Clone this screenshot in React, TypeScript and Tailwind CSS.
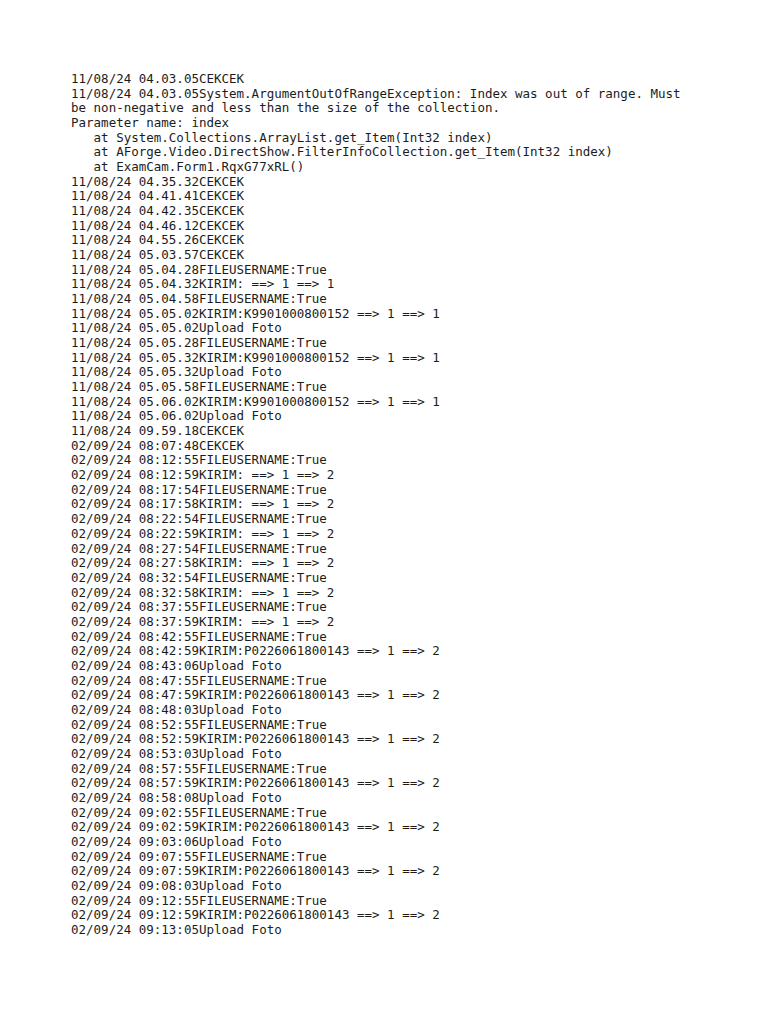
import React from "react";

const lines: string[] = [
  "11/08/24 04.03.05CEKCEK",
  "11/08/24 04.03.05System.ArgumentOutOfRangeException: Index was out of range. Must",
  "be non-negative and less than the size of the collection.",
  "Parameter name: index",
  "   at System.Collections.ArrayList.get_Item(Int32 index)",
  "   at AForge.Video.DirectShow.FilterInfoCollection.get_Item(Int32 index)",
  "   at ExamCam.Form1.RqxG77xRL()",
  "11/08/24 04.35.32CEKCEK",
  "11/08/24 04.41.41CEKCEK",
  "11/08/24 04.42.35CEKCEK",
  "11/08/24 04.46.12CEKCEK",
  "11/08/24 04.55.26CEKCEK",
  "11/08/24 05.03.57CEKCEK",
  "11/08/24 05.04.28FILEUSERNAME:True",
  "11/08/24 05.04.32KIRIM: ==> 1 ==> 1",
  "11/08/24 05.04.58FILEUSERNAME:True",
  "11/08/24 05.05.02KIRIM:K9901000800152 ==> 1 ==> 1",
  "11/08/24 05.05.02Upload Foto",
  "11/08/24 05.05.28FILEUSERNAME:True",
  "11/08/24 05.05.32KIRIM:K9901000800152 ==> 1 ==> 1",
  "11/08/24 05.05.32Upload Foto",
  "11/08/24 05.05.58FILEUSERNAME:True",
  "11/08/24 05.06.02KIRIM:K9901000800152 ==> 1 ==> 1",
  "11/08/24 05.06.02Upload Foto",
  "11/08/24 09.59.18CEKCEK",
  "02/09/24 08:07:48CEKCEK",
  "02/09/24 08:12:55FILEUSERNAME:True",
  "02/09/24 08:12:59KIRIM: ==> 1 ==> 2",
  "02/09/24 08:17:54FILEUSERNAME:True",
  "02/09/24 08:17:58KIRIM: ==> 1 ==> 2",
  "02/09/24 08:22:54FILEUSERNAME:True",
  "02/09/24 08:22:59KIRIM: ==> 1 ==> 2",
  "02/09/24 08:27:54FILEUSERNAME:True",
  "02/09/24 08:27:58KIRIM: ==> 1 ==> 2",
  "02/09/24 08:32:54FILEUSERNAME:True",
  "02/09/24 08:32:58KIRIM: ==> 1 ==> 2",
  "02/09/24 08:37:55FILEUSERNAME:True",
  "02/09/24 08:37:59KIRIM: ==> 1 ==> 2",
  "02/09/24 08:42:55FILEUSERNAME:True",
  "02/09/24 08:42:59KIRIM:P0226061800143 ==> 1 ==> 2",
  "02/09/24 08:43:06Upload Foto",
  "02/09/24 08:47:55FILEUSERNAME:True",
  "02/09/24 08:47:59KIRIM:P0226061800143 ==> 1 ==> 2",
  "02/09/24 08:48:03Upload Foto",
  "02/09/24 08:52:55FILEUSERNAME:True",
  "02/09/24 08:52:59KIRIM:P0226061800143 ==> 1 ==> 2",
  "02/09/24 08:53:03Upload Foto",
  "02/09/24 08:57:55FILEUSERNAME:True",
  "02/09/24 08:57:59KIRIM:P0226061800143 ==> 1 ==> 2",
  "02/09/24 08:58:08Upload Foto",
  "02/09/24 09:02:55FILEUSERNAME:True",
  "02/09/24 09:02:59KIRIM:P0226061800143 ==> 1 ==> 2",
  "02/09/24 09:03:06Upload Foto",
  "02/09/24 09:07:55FILEUSERNAME:True",
  "02/09/24 09:07:59KIRIM:P0226061800143 ==> 1 ==> 2",
  "02/09/24 09:08:03Upload Foto",
  "02/09/24 09:12:55FILEUSERNAME:True",
  "02/09/24 09:12:59KIRIM:P0226061800143 ==> 1 ==> 2",
  "02/09/24 09:13:05Upload Foto",
];

export default function App() {
  return (
    <div className="min-h-[1024px] w-full bg-white pl-[71px] pt-[72px]">
      <div className="font-['DejaVu_Sans_Mono',monospace] text-[12.5px] leading-[14.67px] text-[#1c1c1c]">
        {lines.map((line, i) => (
          <div key={i} className="whitespace-pre">
            {line}
          </div>
        ))}
      </div>
    </div>
  );
}
